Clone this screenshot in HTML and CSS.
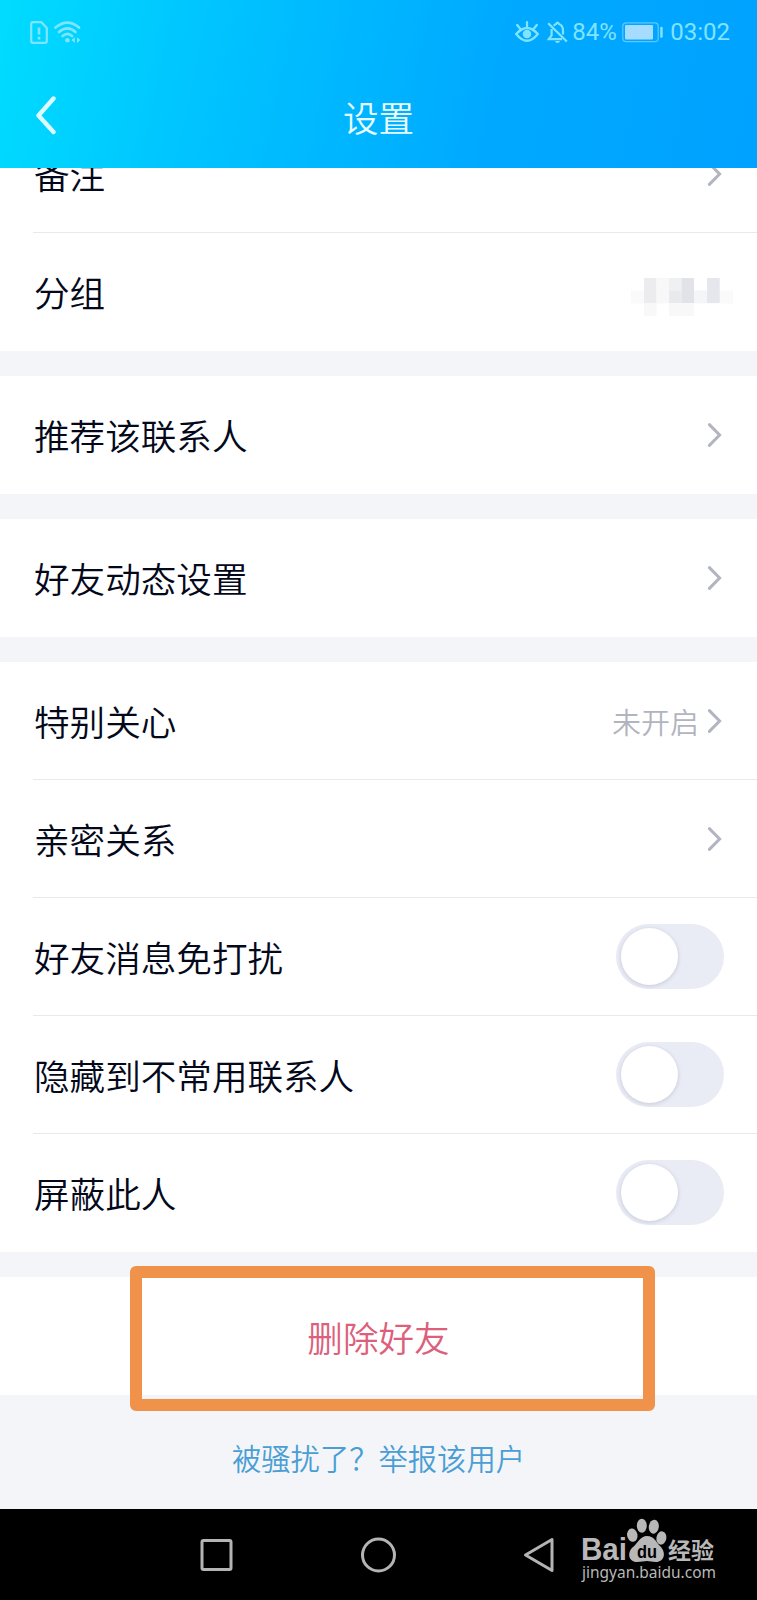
FILE: index.html
```
<!DOCTYPE html>
<html lang="zh-CN">
  <head>
    <meta charset="UTF-8" />
    <title>设置</title>
    <link rel="stylesheet" href="styles.css">
  </head>
  <body>
    <svg width="0" height="0" class="defs">
      <symbol id="arrow" viewBox="0 0 16 26">
        <path d="M2.4 2.6 L12.6 13 L2.4 23.4" fill="none" stroke="#b2b4c0" stroke-width="3" stroke-linecap="round" stroke-linejoin="miter" />
      </symbol>
    </svg>
    <div class="header">
      <div class="status">
        <svg class="sim" width="18" height="23" viewBox="0 0 18 23">
          <path d="M3 1.2 H11.3 L16.8 7 V20 Q16.8 21.8 15 21.8 H3 Q1.2 21.8 1.2 20 V3 Q1.2 1.2 3 1.2 Z" fill="none" stroke="currentColor" stroke-width="2.2" />
          <path d="M9 6.5 V13.5 M9 15.8 V18.4" stroke="currentColor" stroke-width="2.6" />
        </svg>
        <svg class="wifi" width="27" height="23" viewBox="0 0 27 23">
          <g fill="none" stroke="currentColor" stroke-width="2.6" stroke-linecap="round">
            <path d="M1.5 6.6 Q13.5 -3.4 25 6.6" />
            <path d="M5 11 Q13.5 3.6 21.5 11" />
            <path d="M8.6 15 Q13.4 10.6 18 15" />
          </g>
          <circle cx="13.4" cy="19.3" r="2.3" fill="currentColor" />
          <path d="M20.8 16.2 V22 L17.5 19.1 Z M23 16.2 V22 L26.3 19.1 Z" fill="currentColor" />
        </svg>
        <svg class="eye" width="24" height="22" viewBox="0 0 24 22">
          <g fill="none" stroke="currentColor" stroke-width="2.3" stroke-linecap="round">
            <path d="M1.2 13 Q12 1 22.8 13 Q12 26.5 1.2 13 Z" />
            <path d="M12 1.2 V5.5 M2.2 4 L5 7.5 M21.8 4 L19 7.5" />
          </g>
          <circle cx="12" cy="13" r="4.3" fill="currentColor" />
        </svg>
        <svg class="bell" width="21" height="23" viewBox="0 0 21 23">
          <g fill="none" stroke="currentColor" stroke-width="2.2">
            <path d="M1.2 2.2 L19.8 20.5" />
            <path d="M6.8 4.8 Q8 3.3 9 3 Q10.5 .2 12 3 Q16 4.5 16 9.5 V13.5" />
            <path d="M4.6 8 V14.3 L1.8 18.2 H15" />
          </g>
          <path d="M8 20 H13 Q12.5 22 10.5 22 Q8.5 22 8 20 Z" fill="currentColor" />
        </svg>
        <span class="percent">84%</span>
        <svg class="battery" width="42" height="21" viewBox="0 0 42 21">
          <rect x=".8" y=".8" width="35.4" height="18.9" rx="3.5" fill="none" stroke="#5cc8ff" stroke-width="1.2" />
          <rect x="3" y="3" width="28" height="14.5" rx="1" fill="#a5dcff" />
          <rect x="38.2" y="4.8" width="2.5" height="11" rx="1" fill="currentColor" />
        </svg>
        <span class="time">03:02</span>
      </div>
      <div class="titlebar">
        <svg class="back" width="22" height="40" viewBox="0 0 22 40">
          <path d="M19.5 3.5 L4.5 20.5 L19.5 37" fill="none" stroke="#dcfaff" stroke-width="4.4" stroke-linecap="round" stroke-linejoin="round" />
        </svg>
        <h1>设置</h1>
      </div>
    </div>

    <div class="content">
      <div class="group">
        <div class="row"><span>备注</span><svg class="arrow"><use href="#arrow" /></svg></div>
        <div class="row">
          <span>分组</span>
          <svg class="mosaic" width="102" height="38" viewBox="0 0 102 38">
            <rect x="0" y="12.5" width="102" height="13" fill="#fafafb" />
            <rect x="13" y="0" width="12.5" height="25" fill="#ececee" />
            <rect x="13" y="25" width="12.5" height="13" fill="#f8f8f9" />
            <rect x="25.5" y="0" width="12.5" height="25" fill="#f8f8f9" />
            <rect x="38" y="0" width="12.5" height="12.5" fill="#f0f0f2" />
            <rect x="38" y="12.5" width="12.5" height="12.5" fill="#e9eaee" />
            <rect x="50.5" y="0" width="12.5" height="25" fill="#e2e3e8" />
            <rect x="38" y="25" width="25" height="13" fill="#f8f8f9" />
            <rect x="63" y="12.5" width="13" height="12.5" fill="#f4f5f8" />
            <rect x="76" y="0" width="12.7" height="25" fill="#e6e7ec" />
          </svg>
        </div>
      </div>
      <div class="group">
        <div class="row"><span>推荐该联系人</span><svg class="arrow"><use href="#arrow" /></svg></div>
      </div>
      <div class="group">
        <div class="row"><span>好友动态设置</span><svg class="arrow"><use href="#arrow" /></svg></div>
      </div>
      <div class="group">
        <div class="row"><span>特别关心</span><em>未开启</em><svg class="arrow"><use href="#arrow" /></svg></div>
        <div class="row"><span>亲密关系</span><svg class="arrow"><use href="#arrow" /></svg></div>
        <div class="row"><span>好友消息免打扰</span><i class="switch"></i></div>
        <div class="row"><span>隐藏到不常用联系人</span><i class="switch"></i></div>
        <div class="row"><span>屏蔽此人</span><i class="switch"></i></div>
      </div>
      <div class="delete">
        <span>删除好友</span>
        <div class="highlight"></div>
      </div>
      <a class="report">被骚扰了？举报该用户</a>
    </div>

    <div class="navbar">
      <svg width="40" height="40" viewBox="0 0 40 40">
        <rect x="5" y="5.5" width="29" height="29" rx="1.5" />
      </svg>
      <svg width="40" height="40" viewBox="0 0 40 40">
        <circle cx="19.5" cy="20" r="16" />
      </svg>
      <svg width="40" height="40" viewBox="0 0 40 40">
        <path d="M4.500 20 L31 4.500 V35.500 Z" />
      </svg>
      <div class="watermark">
        <svg width="138" height="76" viewBox="0 0 138 76">
          <text x="0" y="45" class="brand" textLength="46" lengthAdjust="spacingAndGlyphs">Bai</text>
          <g fill="#b8b8b8">
            <ellipse cx="51.3" cy="20.2" rx="5.2" ry="6.7" transform="rotate(-10 51.3 20.2)" />
            <ellipse cx="60.8" cy="10.7" rx="5" ry="7" />
            <ellipse cx="72.8" cy="11.7" rx="5" ry="7" transform="rotate(8 72.8 11.7)" />
            <ellipse cx="80.4" cy="23" rx="5" ry="6.7" transform="rotate(10 80.4 23)" />
            <path d="M66 21 C73 21 75 27 79 31 C86 38 83 47 75 47 C71 47 69 46 66 46 C63 46 60 47 56 47 C47 47 46 37 52 32 C57 28 59 21 66 21 Z" />
          </g>
          <text x="56" y="42.5" class="du" textLength="20" lengthAdjust="spacingAndGlyphs">du</text>
          <text x="87" y="43.5" class="cn" textLength="46" lengthAdjust="spacingAndGlyphs">经验</text>
          <text x="1" y="63" class="url" textLength="134" lengthAdjust="spacingAndGlyphs">jingyan.baidu.com</text>
        </svg>
      </div>
    </div>
  </body>
</html>
```
FILE: styles.css
```
* {
  box-sizing: border-box;
}
body {
  margin: 0;
  height: 1600px;
  overflow: hidden;
  display: flex;
  flex-direction: column;
  background: #f4f5f9;
  color: #03081a;
  font-family: "Noto Sans CJK SC", sans-serif;
  font-weight: 350;
}
svg {
  display: block;
  flex-shrink: 0;
}
.defs {
  position: absolute;
}

.header {
  height: 168px;
  flex-shrink: 0;
  position: relative;
  z-index: 1;
  background: linear-gradient(102deg, #00dcff 0%, #00c4ff 27%, #00a9ff 65%, #00a2ff 100%);
}
.status {
  display: flex;
  align-items: center;
  height: 64px;
  padding: 0 27px 0 30px;
  color: #80e4ff;
  font: 400 24px/28px Roboto, sans-serif;
}
.wifi {
  margin-left: 6px;
}
.eye {
  margin-left: auto;
}
.bell {
  margin-left: 8px;
}
.percent {
  margin-left: 4px;
  width: 43px;
}
.battery {
  margin-left: 7px;
}
.time {
  margin-left: 6px;
}
.titlebar {
  display: flex;
  align-items: center;
  height: 104px;
  padding: 0 34px 2px;
}
.titlebar h1 {
  flex: 1;
  margin: 0 22px 0 0;
  padding-top: 3px;
  text-align: center;
  color: #e8fbff;
  font-size: 35.6px;
  font-weight: 350;
  line-height: 50px;
}

/* the list is scrolled a little under the header */
.content {
  flex: 1;
  margin-top: -53px;
}
.group {
  margin-bottom: 25px;
  background: #fff;
}
.row {
  display: flex;
  align-items: center;
  height: 118px;
  margin-left: 33px;
  padding-right: 33px;
  border-bottom: 1px solid #e6e9ee;
}
.row:last-child {
  border-bottom-color: transparent;
}
.row span {
  flex: 1;
  padding: 1px 0 0 1px;
  font-size: 35.6px;
  line-height: 50px;
}
.row em {
  margin-right: 8px;
  padding-top: 1px;
  color: #b2b4c0;
  font-size: 29px;
  font-style: normal;
}
.arrow {
  width: 16px;
  height: 26px;
  margin-right: 1px;
}
.mosaic {
  margin: 10px -9px 0 0;
}
.switch {
  width: 108px;
  height: 65px;
  padding: 4px 5px;
  border-radius: 33px;
  background: #e9ebf5;
}
.switch::before {
  content: "";
  display: block;
  width: 57px;
  height: 57px;
  border-radius: 50%;
  background: #fff;
  box-shadow: 0 1px 4px rgba(60, 65, 100, 0.2);
}

.delete {
  position: relative;
  display: flex;
  align-items: center;
  justify-content: center;
  height: 118px;
  background: #fff;
  color: #dc5f7c;
  font-size: 35.6px;
}
.highlight {
  position: absolute;
  top: -11px;
  left: 130px;
  width: 525px;
  height: 145px;
  border: 12.5px solid #f0924a;
  border-radius: 6px;
}
.report {
  display: block;
  padding-top: 41px;
  color: #4a9ed4;
  font-size: 29.3px;
  line-height: 42px;
  text-align: center;
}

.navbar {
  position: relative;
  display: flex;
  align-items: center;
  justify-content: center;
  gap: 122px;
  height: 91px;
  flex-shrink: 0;
  background: #000;
}
.navbar > svg {
  fill: none;
  stroke: #b4b4b4;
  stroke-width: 3;
  stroke-linejoin: round;
}
.watermark {
  position: absolute;
  top: 6px;
  left: 581px;
}
.watermark text {
  fill: #b8b8b8;
}
.watermark .brand {
  font: bold 31px "Liberation Sans", sans-serif;
}
.watermark .du {
  fill: #000;
  font: bold 19px "Liberation Sans", sans-serif;
}
.watermark .cn {
  font: bold 23px "Noto Sans CJK SC", sans-serif;
}
.watermark .url {
  font: 17px "Noto Sans", sans-serif;
}
```
